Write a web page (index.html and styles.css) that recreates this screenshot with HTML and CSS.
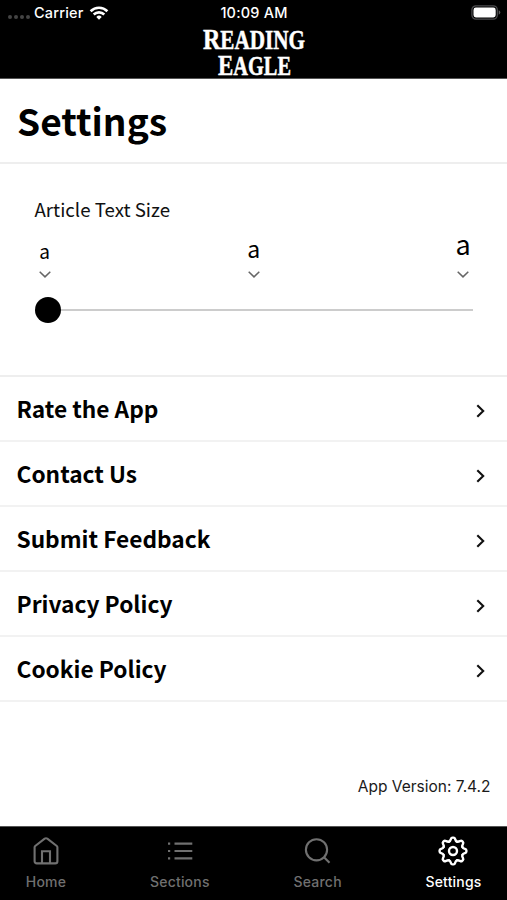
FILE: index.html
```html
<!DOCTYPE html>
<html lang="en">
<head>
<meta charset="utf-8">
<title>Settings</title>
<link rel="stylesheet" href="styles.css">
</head>
<body>
<div class="app">
  <header class="top">
    <div class="status">
      <div class="carrier">
        <span class="dots"><i></i><i></i><i></i><i></i></span>
        <span class="carrier-name">Carrier</span>
        <svg class="wifi" width="20" height="16" viewBox="0 0 20 16" fill="none" stroke="#fff" stroke-width="2.6"><path d="M1.6 6.2a12 12 0 0 1 16.8 0M4.7 9.5a7.6 7.6 0 0 1 10.6 0"/><path d="M10 14.7l-2.7-2.8a3.9 3.9 0 0 1 5.4 0z" fill="#fff" stroke="none"/></svg>
      </div>
      <time class="clock">10:09 AM</time>
      <svg class="battery" width="30" height="16" viewBox="0 0 30 16"><rect x=".9" y=".9" width="25.4" height="13.2" rx="4" fill="none" stroke="#4b4b4d" stroke-width="1.3"/><rect x="2.5" y="2.5" width="22.2" height="10" rx="2.4" fill="#fff"/><path d="M27.7 5.3q1.6.6 1.6 2.2t-1.6 2.2z" fill="#5c5c5e"/></svg>
    </div>
    <svg class="logo" width="104" height="52" viewBox="0 0 104 52">
      <text x="1" y="23.3" textLength="102" lengthAdjust="spacingAndGlyphs">R<tspan class="small">EADING</tspan></text>
      <text x="16" y="48.7" textLength="73" lengthAdjust="spacingAndGlyphs">E<tspan class="small">AGLE</tspan></text>
    </svg>
  </header>
  <h1 class="title">Settings</h1>
  <section class="text-size">
    <h2 class="label">Article Text Size</h2>
    <div class="sizes">
      <div class="size"><span class="a-small">a</span><svg width="12" height="7" viewBox="0 0 12 7"><path d="M.7.8 6 5.9 11.3.8"/></svg></div>
      <div class="size"><span class="a-medium">a</span><svg width="12" height="7" viewBox="0 0 12 7"><path d="M.7.8 6 5.9 11.3.8"/></svg></div>
      <div class="size"><span class="a-large">a</span><svg width="12" height="7" viewBox="0 0 12 7"><path d="M.7.8 6 5.9 11.3.8"/></svg></div>
    </div>
    <div class="slider"><span class="thumb"></span><span class="track"></span></div>
  </section>
  <ul class="menu">
    <li><span>Rate the App</span><svg width="9" height="14" viewBox="0 0 9 14"><path d="M1.3 1.2 7.2 7 1.3 12.8"/></svg></li>
    <li><span>Contact Us</span><svg width="9" height="14" viewBox="0 0 9 14"><path d="M1.3 1.2 7.2 7 1.3 12.8"/></svg></li>
    <li><span>Submit Feedback</span><svg width="9" height="14" viewBox="0 0 9 14"><path d="M1.3 1.2 7.2 7 1.3 12.8"/></svg></li>
    <li><span>Privacy Policy</span><svg width="9" height="14" viewBox="0 0 9 14"><path d="M1.3 1.2 7.2 7 1.3 12.8"/></svg></li>
    <li><span>Cookie Policy</span><svg width="9" height="14" viewBox="0 0 9 14"><path d="M1.3 1.2 7.2 7 1.3 12.8"/></svg></li>
  </ul>
  <p class="version">App Version: 7.4.2</p>
  <nav class="tabs">
    <a class="tab"><svg width="32" height="32" viewBox="0 0 32 32" stroke-width="2.1"><path d="M4.6 12.3Q4.6 11.5 5.2 11L14.7 3.7Q16 2.8 17.3 3.7L26.8 11Q27.4 11.5 27.4 12.3V26.2Q27.4 28.4 25.2 28.4H6.8Q4.6 28.4 4.6 26.2Z"/><path d="M12 28V16.2H20V28"/></svg><span>Home</span></a>
    <a class="tab"><svg width="32" height="32" viewBox="0 0 32 32" stroke-width="2.2"><path d="M10.5 8.7H28.3M10.5 16H28.3M10.5 23.3H28.3M4 8.7H6.2M4 16H6.2M4 23.3H6.2"/></svg><span>Sections</span></a>
    <a class="tab"><svg width="32" height="32" viewBox="0 0 32 32" stroke-width="2.1"><circle cx="14.5" cy="14.8" r="10.6"/><path d="M22 22.3 27.5 27.7"/></svg><span>Search</span></a>
    <a class="tab active"><svg width="32" height="32" viewBox="-16 -16 32 32" stroke-width="2.4" stroke-linecap="round">
      <defs><path id="tooth" d="M-3.9-9.4C-2.6-9.9-2.4-10.9-2.1-12Q-1.7-13.4-.5-13.4H.5Q1.7-13.4 2.1-12C2.4-10.9 2.6-9.9 3.9-9.4"/></defs>
      <use href="#tooth"/><use href="#tooth" transform="rotate(45)"/><use href="#tooth" transform="rotate(90)"/><use href="#tooth" transform="rotate(135)"/><use href="#tooth" transform="rotate(180)"/><use href="#tooth" transform="rotate(225)"/><use href="#tooth" transform="rotate(270)"/><use href="#tooth" transform="rotate(315)"/><circle r="4"/></svg><span>Settings</span></a>
  </nav>
</div>
</body>
</html>
```
FILE: styles.css
```css
* { box-sizing: border-box; }
body { margin: 0; background: #fff; color: #000; font-family: "Noto Sans CJK SC", "Noto Sans", sans-serif; }
.app { width: 507px; height: 900px; display: flex; flex-direction: column; overflow: hidden; }
svg { display: block; flex: none; }

.top { height: 79px; flex: none; background: #000; color: #fff; display: flex; flex-direction: column; align-items: center; border-bottom: 1px solid #555; }
.status { width: 100%; height: 26px; flex: none; padding: 0 6px 0 8px; display: grid; grid-template-columns: 1fr auto 1fr; align-items: center; font: 450 14.5px/26px Inter, sans-serif; letter-spacing: .2px; }
.clock { margin-left: -1px; }
.carrier { display: flex; align-items: center; }
.dots { display: flex; gap: 2px; margin: 8px 4px 0 0; }
.dots i { width: 4px; height: 4px; border-radius: 50%; background: #444; }
.wifi { margin-left: 5px; }
.battery { justify-self: end; }
.logo { fill: #fff; stroke: #fff; stroke-width: .5; overflow: visible; font-family: "Liberation Serif", serif; font-size: 30px; font-weight: 700; }
.small { font-size: 26.5px; }

.title { height: 85px; flex: none; margin: 0; padding-left: 17px; border-bottom: 2px solid #eee; font-size: 37.1px; line-height: 83px; font-weight: 700; }
.text-size { height: 213px; flex: none; padding: 32px 34px 0 34.5px; border-bottom: 2px solid #eee; }
.label { margin: 0; font-size: 18.7px; line-height: 25px; font-weight: 400; color: #111; }
.sizes { height: 57px; display: flex; justify-content: space-between; align-items: flex-end; padding: 0 4px 0 4px; }
.size { display: flex; flex-direction: column; align-items: center; width: 12px; }
.size span { line-height: 30px; }
.size svg, .menu svg { fill: none; stroke: #666; stroke-width: 1.5; }
.size .a-small { font-size: 19px; margin-bottom: 5px; }
.size .a-medium { font-size: 23px; margin-bottom: 8px; }
.size .a-large { font-size: 27px; margin-bottom: 12px; }
.slider { height: 26px; margin-top: 19px; display: flex; align-items: center; }
.thumb { width: 26px; height: 26px; border-radius: 50%; background: #000; }
.track { flex: 1; height: 2px; background: #ccc; }

.menu { margin: 0; padding: 0; list-style: none; }
.menu li { height: 65.1px; padding: 0 22.5px 0 16.5px; display: flex; align-items: center; justify-content: space-between; border-bottom: 2px solid #f2f2f2; font-size: 22.7px; line-height: 30px; font-weight: 700; }
.menu svg { stroke: #111; stroke-width: 2.1; margin-top: 5px; }

.version { margin: 73px 16.5px 0 0; text-align: right; font: 400 15.5px/24px Inter, sans-serif; color: #1a1a1a; }
.tabs { height: 74px; flex: none; margin-top: auto; padding: 0 11.5px 0 4px; background: #000; display: flex; justify-content: space-between; border-top: 1px solid #555; }
.tab { width: 84px; padding-top: 8px; display: flex; flex-direction: column; align-items: center; color: #707070; font: 450 14px/20px Inter, sans-serif; letter-spacing: .2px; }
.tab:nth-child(2) { margin: 0 2px 0 -2px; }
.tab svg { fill: none; stroke: currentColor; }
.tab span { margin-top: 5px; }
.active { color: #fff; }
```
